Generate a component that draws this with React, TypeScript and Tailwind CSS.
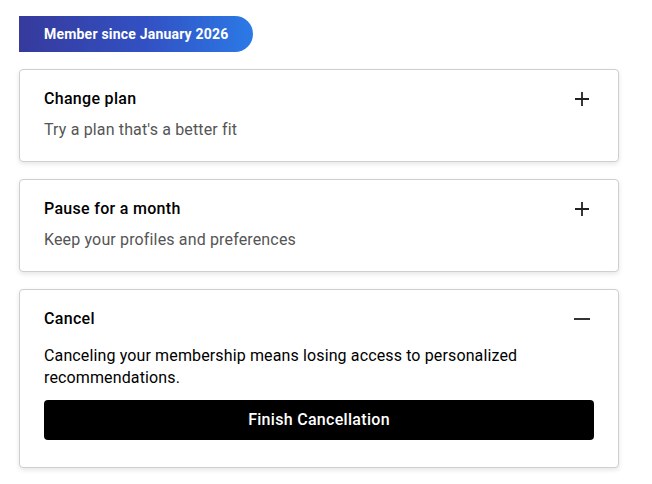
import { useState } from 'react'

type Option = {
  id: string
  title: string
  subtitle?: string
}

const options: Option[] = [
  { id: 'change', title: 'Change plan', subtitle: "Try a plan that's a better fit" },
  { id: 'pause', title: 'Pause for a month', subtitle: 'Keep your profiles and preferences' },
  { id: 'cancel', title: 'Cancel' },
]

function PlusIcon() {
  return (
    <svg width="24" height="24" viewBox="0 0 24 24" fill="none" aria-hidden="true">
      <path d="M12 5v14M5 12h14" stroke="#222" strokeWidth="1.8" />
    </svg>
  )
}

function MinusIcon() {
  return (
    <svg width="24" height="24" viewBox="0 0 24 24" fill="none" aria-hidden="true">
      <path d="M4 12h16" stroke="#333" strokeWidth="2" />
    </svg>
  )
}

export default function App() {
  const [open, setOpen] = useState('cancel')

  return (
    <div className="min-h-screen bg-white px-[19px] pt-4 font-['Roboto','Noto_Sans',sans-serif] text-black">
      <div className="flex h-9 w-[234px] items-center rounded-r-full bg-[linear-gradient(90deg,#363a9c_0%,#3251c4_55%,#2b7ae6_100%)] pl-[25px] text-[14px] font-bold tracking-[0.2px] text-white">
        Member since January 2026
      </div>

      <div className="mt-[17px] flex w-[600px] flex-col gap-[17px]">
        {options.map((opt) => {
          const isOpen = open === opt.id
          return (
            <div
              key={opt.id}
              className="rounded-[4px] border border-[#cfcfcf] bg-white px-6 pt-[17px] shadow-[0_2px_5px_rgba(0,0,0,0.1)]"
            >
              <button
                type="button"
                onClick={() => setOpen(isOpen ? '' : opt.id)}
                className="flex w-full items-start justify-between text-left"
              >
                <span className="text-[16px] leading-6 font-medium tracking-[0.3px]">{opt.title}</span>
                {isOpen ? <MinusIcon /> : <PlusIcon />}
              </button>

              {!isOpen && opt.subtitle && (
                <p className="mt-[7px] pb-[19px] text-[16px] leading-6 tracking-[0.15px] text-[#555]">{opt.subtitle}</p>
              )}

              {isOpen && (
                <div className="pb-[27px]">
                  <p className="mt-[14px] text-[16px] leading-[22px] tracking-[0.13px]">
                    Canceling your membership means losing access to personalized recommendations.
                  </p>
                  <button
                    type="button"
                    className="mt-[11px] h-10 w-full rounded-[4px] bg-black text-[16px] font-medium tracking-[0.3px] text-white"
                  >
                    Finish Cancellation
                  </button>
                </div>
              )}
            </div>
          )
        })}
      </div>
    </div>
  )
}
